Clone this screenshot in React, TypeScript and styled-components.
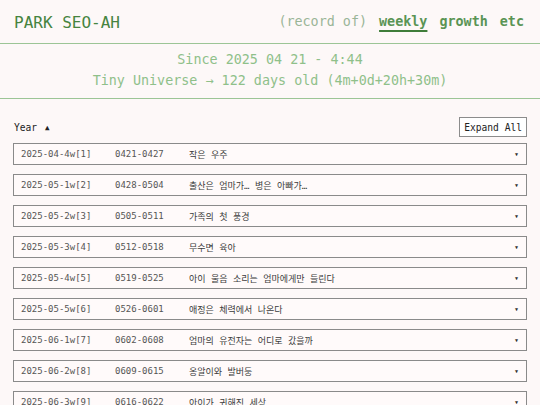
import React from 'react';
import styled, { createGlobalStyle } from 'styled-components';

const GlobalStyle = createGlobalStyle`
  html, body {
    margin: 0;
    padding: 0;
    background: #fdf8f8;
  }
  body {
    font-family: "DejaVu Sans Mono", monospace;
  }
`;

const Header = styled.header`
  height: 43px;
  display: flex;
  align-items: center;
  justify-content: space-between;
  padding: 0 16px 0 14px;
  border-bottom: 1px solid #9cc596;
`;

const Brand = styled.div`
  font-size: 16px;
  color: #46843f;
  padding-top: 2px;
`;

const Nav = styled.nav`
  display: flex;
  align-items: baseline;
  gap: 12px;
  font-size: 13.4px;
`;

const NavLabel = styled.span`
  color: #9ab597;
`;

const NavLink = styled.a<{ $active?: boolean }>`
  color: #5a9454;
  font-weight: 700;
  text-decoration: ${(p) => (p.$active ? 'underline' : 'none')};
  text-decoration-color: #3f7d3a;
  text-underline-offset: 4px;
  text-decoration-thickness: 1.5px;
  cursor: pointer;
`;

const Intro = styled.section`
  padding: 5px 0 7px;
  border-bottom: 1px solid #9cc596;
  text-align: center;
  color: #8fc08a;
  font-size: 13.4px;
  line-height: 21px;
`;

const Toolbar = styled.div`
  display: flex;
  align-items: center;
  justify-content: space-between;
  padding: 18px 13px 6px 14px;
`;

const SortLabel = styled.span`
  font-size: 9.6px;
  color: #222;
  display: flex;
  align-items: center;
  gap: 8px;
`;

const SortArrow = styled.span`
  font-size: 7.5px;
`;

const ExpandButton = styled.button`
  font-family: "DejaVu Sans Mono", monospace;
  font-size: 9.6px;
  color: #222;
  background: #ffffff;
  border: 1px solid #8c8c8c;
  height: 20px;
  padding: 0 4px;
  cursor: pointer;
`;

const List = styled.ul`
  list-style: none;
  margin: 0;
  padding: 0 13px 20px;
  display: flex;
  flex-direction: column;
  gap: 9px;
`;

const Row = styled.li`
  height: 20px;
  border: 1px solid #8a8a8a;
  display: grid;
  grid-template-columns: 94px 74px 1fr auto;
  align-items: center;
  padding: 0 8px 0 7px;
  font-size: 9px;
  background: #fffafa;
`;

const Cell = styled.span`
  color: #555;
  white-space: nowrap;
  overflow: hidden;
  text-overflow: ellipsis;
`;

const Title = styled.span`
  font-family: "DejaVu Sans Mono", "Noto Sans CJK KR", monospace;
  color: #3a3a3a;
  white-space: nowrap;
`;

const Caret = styled.span`
  font-size: 5px;
  color: #333;
`;

const weeks = [
  ['2025-04-4w[1]', '0421-0427', '작은 우주'],
  ['2025-05-1w[2]', '0428-0504', '출산은 엄마가… 병은 아빠가…'],
  ['2025-05-2w[3]', '0505-0511', '가족의 첫 풍경'],
  ['2025-05-3w[4]', '0512-0518', '무수면 육아'],
  ['2025-05-4w[5]', '0519-0525', '아이 울음 소리는 엄마에게만 들린다'],
  ['2025-05-5w[6]', '0526-0601', '애정은 체력에서 나온다'],
  ['2025-06-1w[7]', '0602-0608', '엄마의 유전자는 어디로 갔을까'],
  ['2025-06-2w[8]', '0609-0615', '옹알이와 발버둥'],
  ['2025-06-3w[9]', '0616-0622', '아이가 귀해진 세상'],
  ['2025-06-4w[10]', '0623-0629', '한 달의 기록'],
];

export default function App() {
  return (
    <>
      <GlobalStyle />
      <Header>
        <Brand>PARK SEO-AH</Brand>
        <Nav>
          <NavLabel>(record of)</NavLabel>
          <NavLink $active>weekly</NavLink>
          <NavLink>growth</NavLink>
          <NavLink>etc</NavLink>
        </Nav>
      </Header>
      <Intro>
        <div>Since 2025 04 21 - 4:44</div>
        <div>Tiny Universe → 122 days old (4m+0d+20h+30m)</div>
      </Intro>
      <Toolbar>
        <SortLabel>
          Year <SortArrow>▲</SortArrow>
        </SortLabel>
        <ExpandButton>Expand All</ExpandButton>
      </Toolbar>
      <List>
        {weeks.map(([week, range, title]) => (
          <Row key={week}>
            <Cell>{week}</Cell>
            <Cell>{range}</Cell>
            <Title>{title}</Title>
            <Caret>▼</Caret>
          </Row>
        ))}
      </List>
    </>
  );
}
